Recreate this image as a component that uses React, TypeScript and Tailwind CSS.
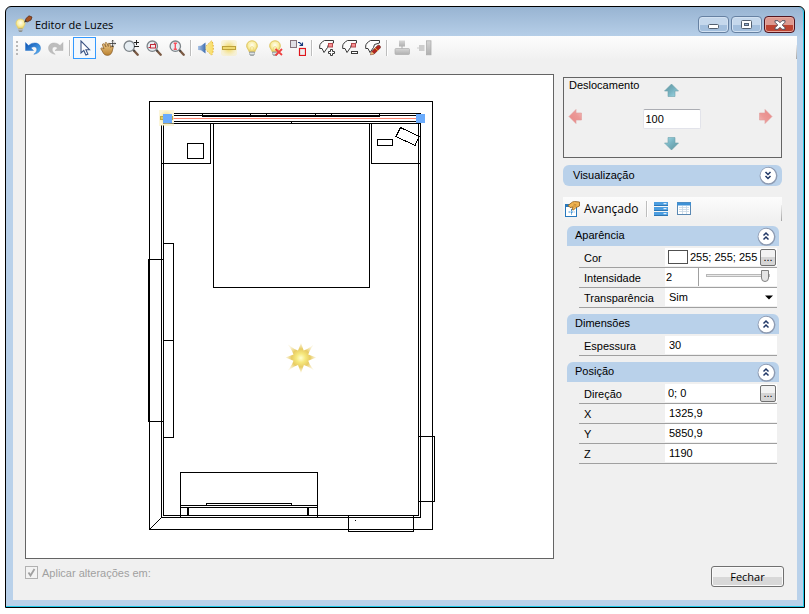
import React, { useState } from "react";

const SANS = "font-['Liberation_Sans',Arial,sans-serif]";
const SEGOE = "font-['Open_Sans','Noto_Sans',sans-serif]";

function Icon({ children, size = 16 }: { children: React.ReactNode; size?: number }) {
  return (
    <svg width={size} height={size} viewBox="0 0 16 16" fill="none" aria-hidden="true" className="shrink-0">
      {children}
    </svg>
  );
}

function Defs() {
  return (
    <svg width="0" height="0" className="absolute" aria-hidden="true">
      <defs>
        <linearGradient id="blueArrow" x1="0" y1="0" x2="1" y2="1">
          <stop offset="0" stopColor="#0b4fb0" />
          <stop offset="1" stopColor="#5cb6f5" />
        </linearGradient>
        <linearGradient id="hand" x1="0" y1="0" x2="0" y2="1">
          <stop offset="0" stopColor="#f3cf8d" />
          <stop offset="1" stopColor="#b9802f" />
        </linearGradient>
        <radialGradient id="bulb" cx="0.5" cy="0.4" r="0.6">
          <stop offset="0" stopColor="#fffef0" />
          <stop offset="0.6" stopColor="#f9eda0" />
          <stop offset="1" stopColor="#e6cb58" />
        </radialGradient>
        <radialGradient id="glow">
          <stop offset="0.3" stopColor="#f3df82" />
          <stop offset="1" stopColor="#f8edb8" stopOpacity="0.5" />
        </radialGradient>
        <radialGradient id="starFill">
          <stop offset="0" stopColor="#ffffd0" />
          <stop offset="0.3" stopColor="#f6e87c" />
          <stop offset="0.6" stopColor="#e8cc64" />
          <stop offset="1" stopColor="#f0dc94" stopOpacity="0.3" />
        </radialGradient>
        <linearGradient id="teal" x1="0" y1="0" x2="1" y2="1">
          <stop offset="0" stopColor="#5d929c" />
          <stop offset="0.55" stopColor="#79b4c2" />
          <stop offset="1" stopColor="#a3dbe8" />
        </linearGradient>
        <linearGradient id="pink" x1="0" y1="0" x2="1" y2="1">
          <stop offset="0" stopColor="#e88886" />
          <stop offset="0.6" stopColor="#ec9896" />
          <stop offset="1" stopColor="#f3bcba" />
        </linearGradient>
        <linearGradient id="grayBox" x1="0" y1="0" x2="0" y2="1">
          <stop offset="0" stopColor="#d6d6d6" />
          <stop offset="1" stopColor="#b0b0b0" />
        </linearGradient>
        <linearGradient id="cone" x1="0" y1="0" x2="1" y2="0">
          <stop offset="0" stopColor="#a9c3e6" />
          <stop offset="1" stopColor="#3e6db0" />
        </linearGradient>
        <linearGradient id="beam" x1="0" y1="0" x2="1" y2="0">
          <stop offset="0" stopColor="#f4e9a8" />
          <stop offset="1" stopColor="#fbdd62" />
        </linearGradient>
      </defs>
    </svg>
  );
}

const bulbShape = (
  <>
    <path d="M8 .8C4.8.8 2.700 3 2.700 5.800c0 2 1.100 3.100 1.900 4.400.3.600.4 1 .4 1.500h6c0-.5.1-.9.4-1.500.8-1.300 1.900-2.400 1.900-4.400C13.300 3 11.200.8 8 .8z" fill="url(#bulb)" stroke="#dfc765" />
    <path d="M6.500 11V7.500L8 6.500l1.500 1V11" stroke="#ecd77c" strokeWidth=".7" />
    <path d="M5.500 12h5v2l-1 1.500h-3l-1-1.500z" fill="#b4babd" stroke="#8b9395" strokeWidth=".7" />
    <path d="M5.500 13.400h5" stroke="#e5e9ea" />
  </>
);

const magnifier = (
  <>
    <path d="M10.800 10.500l3.900 4.200" stroke="#7b5a44" strokeWidth="2.400" strokeLinecap="round" />
    <path d="M10 9.500l1.700 1.800" stroke="#454545" strokeWidth="1.800" />
    <circle cx="6.300" cy="6.200" r="5.200" fill="#e6edf2" stroke="#7d8489" strokeWidth="1.300" />
  </>
);

const polyShape = (
  <path d="M14.500 3V.5H5.500C2.700 2 .7 4 .7 6v2.500h2.300L5 12.500l3.500-5 1-3z" fill="#fcfcfc" stroke="#3a3a3a" strokeWidth="1" />
);

const icons = {
  undo: (
    <path d="M.5 2.500v8h8L6 8c2.600-2.100 5.800-1.300 5.800 1.500 0 2-1 3.300-3 4.800 4-.6 6.700-2.800 6.700-6.200C15.500 2.800 8.700 1 3.500 5.500z" fill="url(#blueArrow)" stroke="#1767c4" strokeWidth=".4" />
  ),
  redo: (
    <path d="M15 2.500v8H7L9.600 8C7.200 5.900 4.200 6.700 4.200 9.500c0 2 1 3.300 3 4.800-4-.6-6.700-2.800-6.700-6.200C.5 2.800 7.300 1 12 5.500z" fill="#bdbdbd" stroke="#a8a8a8" strokeWidth=".4" />
  ),
  pointer: <path d="M4 1v12l2.800-2.600L8.900 15l2-.9-2-4.400h3.600z" fill="#fff" stroke="#3b5384" strokeWidth="1.100" />,
  hand: (
    <>
      <path d="M.8 8.500C1.500 7.500 3 8 4 9L2.500 5c-.2-1.500 1.300-1.700 2-.5L6 7 5 3.500c0-1.300 1.500-1.500 2-.2L8.300 6.500 8.200 4c.2-1.200 1.600-1 1.800.2l.7 3.300 1-1.500c1-.8 2 .1 1.500 1.200L12 12c-.8 2.500-3 3.600-5.500 3.300C3.500 15 3 12 .8 8.500z" fill="url(#hand)" stroke="#8d622f" strokeWidth=".8" />
      <path d="M12.700 0v7M9.500 3.500h6.500" stroke="#333" strokeWidth=".8" />
      <path d="M11.700 1.300L12.700.2l1 1.100M11.700 5.700l1 1.200 1-1.200M14.800 2.500l1 1-1 1" stroke="#333" strokeWidth=".6" />
    </>
  ),
  zoomPM: (
    <>
      {magnifier}
      <path d="M13.500 0v5M11 2.500h5M11 6.500h5" stroke="#222" strokeWidth="1" />
    </>
  ),
  zoomWindow: (
    <>
      {magnifier}
      <rect x="4.500" y="4.500" width="5" height="3.500" fill="#f7e9ea" stroke="#c02a38" strokeWidth="1" />
      <path d="M2.500 7.500h1.500M8 3l1.500.8" stroke="#c02a38" strokeWidth="1" />
    </>
  ),
  zoomExt: (
    <>
      {magnifier}
      <path d="M6.300 3.300v6M4.700 3.300h3.200M4.700 9.200h3.200" stroke="#f8505c" strokeWidth="1.400" />
    </>
  ),
  spot: (
    <>
      <path d="M6 8L13.500.8c2.500 1.700 2.500 12.700 0 14.400z" fill="url(#beam)" />
      <path d="M6 8L13.500.8c2.500 1.700 2.500 12.700 0 14.400z" stroke="#d9a326" strokeWidth=".8" strokeDasharray="1.500 1.500" />
      <path d="M0 6l3-.3L7.500 2.500v11L3 10.300 0 10z" fill="url(#cone)" />
    </>
  ),
  tube: (
    <>
      <rect width="16" height="16" rx="3" fill="url(#glow)" />
      <rect x="1.500" y="6.500" width="13" height="3" fill="#eed870" stroke="#bda13b" />
    </>
  ),
  bulb: bulbShape,
  bulbX: (
    <>
      {bulbShape}
      <path d="M8.500 9l6.500 6M15 9l-6.500 6.500" stroke="#ee4141" strokeWidth="1.800" />
    </>
  ),
  convert: (
    <>
      <rect x=".5" y=".5" width="6" height="7" fill="#e1e0e5" stroke="#85737b" />
      <path d="M8 2.500h1.500L12 5M12.500 2.500v3H9.500" stroke="#173a7c" strokeWidth="1.100" />
      <rect x="9.500" y="8.500" width="6" height="7" fill="#eee" stroke="#df151c" strokeWidth="1.200" />
    </>
  ),
  polyAdd: (
    <>
      {polyShape}
      <rect x="9.500" y="3.500" width="4" height="3.500" fill="#f58f90" stroke="#b5494e" />
      <path d="M11.500 9.500h2v2h2v2h-2v2h-2v-2h-2v-2h2z" fill="#fff" stroke="#3a3a3a" />
    </>
  ),
  polyRemove: (
    <>
      {polyShape}
      <rect x="9.500" y="3.500" width="4" height="3.500" fill="#f58f90" stroke="#b5494e" />
      <rect x="9.500" y="11.500" width="6" height="2" fill="#fff" stroke="#3a3a3a" />
    </>
  ),
  polyEdit: (
    <>
      {polyShape}
      <path d="M5.500 14.800l1.200-3.400 6-6c1.300-1 3.700 1 2.600 2.500L9.200 14z" fill="#b3261f" stroke="#61251c" strokeWidth=".6" />
      <path d="M5.500 14.800l1.200-3.400L9.200 14z" fill="#e8c37f" />
      <path d="M10 8l3 2.800" stroke="#e7a62d" />
    </>
  ),
  alignH: (
    <>
      <rect x="5" y=".5" width="6" height="6" fill="url(#grayBox)" />
      <path d="M8 6v3" stroke="#aaa" />
      <rect x="1" y="8.500" width="14.500" height="6" rx="1" fill="url(#grayBox)" stroke="#adadad" strokeWidth=".7" />
    </>
  ),
  alignV: (
    <>
      <path d="M0 8h3" stroke="#ccc" />
      <rect x="2" y="5" width="5.500" height="6" fill="#cdcdcd" />
      <rect x="9.500" y=".8" width="4.500" height="14" fill="url(#grayBox)" stroke="#adadad" strokeWidth=".8" />
    </>
  ),
};

type IconName = keyof typeof icons;

const toolGroups: { name: IconName; label: string; active?: boolean; disabled?: boolean }[][] = [
  [
    { name: "undo", label: "Desfazer" },
    { name: "redo", label: "Refazer", disabled: true },
  ],
  [
    { name: "pointer", label: "Selecionar", active: true },
    { name: "hand", label: "Mover vista" },
    { name: "zoomPM", label: "Zoom" },
    { name: "zoomWindow", label: "Zoom janela" },
    { name: "zoomExt", label: "Zoom extensão" },
  ],
  [
    { name: "spot", label: "Spot" },
    { name: "tube", label: "Luz linear" },
    { name: "bulb", label: "Lâmpada" },
    { name: "bulbX", label: "Remover luz" },
    { name: "convert", label: "Converter" },
  ],
  [
    { name: "polyAdd", label: "Adicionar ponto" },
    { name: "polyRemove", label: "Remover ponto" },
    { name: "polyEdit", label: "Editar forma" },
  ],
  [
    { name: "alignH", label: "Alinhar horizontal", disabled: true },
    { name: "alignV", label: "Alinhar vertical", disabled: true },
  ],
];

function TitleBar() {
  return (
    <header className="flex h-[29px] items-center pr-[2px] pl-[2px]">
      <svg width="18" height="18" viewBox="0 0 18 18" aria-hidden="true" className="mt-1">
        <path d="M5.500 4C2.500 4 1 6 1 8.500c0 2 1.600 2.800 2 5h5c.4-2.200 2-3 2-5C10 6 8.500 4 5.500 4z" fill="url(#bulb)" stroke="#e3cf70" strokeWidth=".8" />
        <path d="M3.500 13.500h4v2.500l-1 1h-2l-1-1z" fill="#8b8d8a" />
        <path d="M3.500 14.800h4" stroke="#eee" strokeWidth=".7" />
        <path d="M10 6.500l1-3L14 .8l3 1.200-1 3-3.500 1.800z" fill="#a35021" stroke="#532713" strokeWidth=".7" />
        <path d="M9 7.500l1.500-2.500 1.500 1.500z" fill="#35363b" />
      </svg>
      <h1 className={`mt-1.5 ml-0.5 flex-1 text-[11px] leading-4 text-black ${SEGOE}`}>Editor de Luzes</h1>
      <div className="mt-1.5 flex gap-0.5">
        <button aria-label="Minimizar" className="flex h-[17px] w-[31px] items-center justify-center rounded-sm border border-[#6681a2] bg-linear-to-b from-[#c5d8ec] from-50% to-[#a3bfdd] to-50% shadow-[inset_0_0_0_1px_#d3e2f2]">
          <svg width="12" height="6" viewBox="0 0 12 6" className="mt-1" aria-hidden="true">
            <rect x=".5" y=".5" width="10" height="4" rx="1" fill="#fff" stroke="#536070" />
          </svg>
        </button>
        <button aria-label="Maximizar" className="flex h-[17px] w-[31px] items-center justify-center rounded-sm border border-[#6681a2] bg-linear-to-b from-[#c5d8ec] from-50% to-[#a3bfdd] to-50% shadow-[inset_0_0_0_1px_#d3e2f2]">
          <svg width="11" height="9" viewBox="0 0 11 9" aria-hidden="true">
            <rect x=".5" y=".5" width="10" height="8" rx="1" fill="#fff" stroke="#536070" />
            <rect x="3.500" y="3.500" width="4" height="2" fill="#96b2d4" stroke="#536070" />
          </svg>
        </button>
        <button aria-label="Fechar janela" className="flex h-[17px] w-[31px] items-center justify-center rounded-sm border border-[#521520] bg-linear-to-b from-[#dd9a91] from-50% to-[#bd4432] to-50% shadow-[inset_0_0_0_1px_#e8aaa0]">
          <svg width="12" height="10" viewBox="0 0 12 10" aria-hidden="true">
            <path d="M1 .7h3l2 2 2-2h3v1.500L8.300 5 11 7.800v1.500H8l-2-2-2 2H1V7.800L3.700 5 1 2.200z" fill="#fff" stroke="#535260" />
          </svg>
        </button>
      </div>
    </header>
  );
}

function ToolBar() {
  return (
    <div role="toolbar" aria-label="Ferramentas" className="flex h-6 items-center bg-linear-to-b from-[#fdfdfd] to-[#f0f0f0]">
      <span className="mr-[3px] ml-[3px] h-[15px] w-0.5 bg-[repeating-linear-gradient(to_bottom,#b9b9b9_0_2px,transparent_2px_4px)]" />
      {toolGroups.map((group, i) => (
        <React.Fragment key={i}>
          {i > 0 && <span className="mx-[2px] h-4 w-0.5 border-l border-[#bdbdbd] bg-white" />}
          {group.map((t) => (
            <button
              key={t.name}
              aria-label={t.label}
              disabled={t.disabled}
              aria-pressed={t.active}
              className={
                t.active
                  ? "flex h-[22px] w-[23px] items-center justify-center border border-[#3399ff] bg-[#f3f8fd]"
                  : "flex h-[22px] w-[23px] items-center justify-center"
              }
            >
              <Icon>{icons[t.name]}</Icon>
            </button>
          ))}
        </React.Fragment>
      ))}
      <span className="mt-2 ml-auto h-3.5 w-px bg-linear-to-b from-[#eeeeee] to-[#a5a5a5]" />
    </div>
  );
}

function FloorPlan() {
  return (
    <svg viewBox="26 75 527 483" className="block h-full w-full" role="img" aria-label="Planta do ambiente">
      <g stroke="#000" fill="none" shapeRendering="crispEdges">
        {/* walls */}
        <rect x="149.500" y="101.500" width="283" height="428" />
        <path d="M161.500 125v393M163.500 125v391M161 517.500h260M163 515.500h256M418.500 123v393M420.500 113v405" />
        <path d="M149.500 529.500l12-12" />
        {/* curtain rail */}
        <path d="M174 113.500h247M174 115.500h247M174 121.500h247M163 123.500h258M291.500 121v3" />
        <path d="M202 116.500h178M202.500 114v3M250.500 114v3M266.500 114v3M315.500 114v3M331.500 114v3M379.500 114v3" />
        {/* bed and bedside tables */}
        <path d="M161 163.500h49.500V123M213.500 123v164.500h156V123M371.500 123v40.500H421" />
        <rect x="187.500" y="143.500" width="16" height="15" />
        <rect x="377.500" y="139.500" width="15" height="6" />
        <path d="M400.500 127.500l18.500 9-4 9-19-9z" />
        {/* window and wardrobe */}
        <path d="M163 259.500h-14.500v162H163M149.500 259v163M163 243.500h10.500v194H163M163 340.500h10" />
        {/* sideboard */}
        <path d="M180.500 517V472.500h137V517M180 505.500h137M180 507.500h137M206.500 505v-1.500h85v2" />
        <path d="M188 507v9M308 507v9" strokeWidth="2" />
        {/* doors */}
        <path d="M348.500 515v16.500h65V515M418 436.500h16.500v65H418M355 520.500h1" />
      </g>
      <path d="M173 118.500h244" stroke="#ff8370" shapeRendering="crispEdges" />
      <rect x="159" y="110" width="15" height="16" fill="url(#glow)" />
      <rect x="160.500" y="116.500" width="12" height="3" fill="#e0cb68" stroke="#bda945" shapeRendering="crispEdges" />
      <path d="M163 114h9v9h-9zM416 114h9v9h-9z" fill="#6aabfc" shapeRendering="crispEdges" />
      <path
        d="M301 343l2.700 7.500 3.500-1.500 6-4-3.500 6-1.500 3.500 8 3-8 3.300 1.500 3.400 4 5.800-6.200-3.500-3.600-1.500L301 373l-3-8-3.500 1.500-6.500 4 4-6.300 1.500-3.400-8-3.300 8-3-1.500-3.500-4-6.500 6.500 4.500 3.500 1.500z"
        fill="url(#starFill)"
      />
    </svg>
  );
}

const arrowRotation = { up: "", right: "rotate-90", down: "rotate-180", left: "-rotate-90" };

function MoveButton({ dir, label, className }: { dir: keyof typeof arrowRotation; label: string; className: string }) {
  const vertical = dir === "up" || dir === "down";
  return (
    <button aria-label={label} className={className}>
      <svg width="15" height="15" viewBox="0 0 15 15" className={arrowRotation[dir]} aria-hidden="true">
        <path d="M7.500 1l7 7H11v5.500H4V8H.5z" fill={vertical ? "url(#teal)" : "url(#pink)"} stroke={vertical ? "#6fa2ad" : "#e09c9a"} strokeWidth=".6" />
      </svg>
    </button>
  );
}

function Displacement() {
  return (
    <section className="grid h-[81px] grid-cols-[24px_1fr_26px] grid-rows-[24px_32px_20px] items-center justify-items-center border border-[#646464]">
      <label htmlFor="step" className="col-start-1 row-start-1 mb-2.5 w-full pl-[5px] leading-4 whitespace-nowrap">
        Deslocamento
      </label>
      <MoveButton dir="up" label="Mover para cima" className="col-start-2 row-start-1" />
      <MoveButton dir="left" label="Mover para a esquerda" className="col-start-1 row-start-2 mr-0.5 mb-1" />
      <input
        id="step"
        defaultValue="100"
        className="col-start-2 row-start-2 mt-0.5 h-5 w-[58px] rounded-xs border border-[#e2e3ea] border-t-[#abadb3] bg-white px-0.5 outline-none"
      />
      <MoveButton dir="right" label="Mover para a direita" className="col-start-3 row-start-2 mr-1.5 mb-1" />
      <MoveButton dir="down" label="Mover para baixo" className="col-start-2 row-start-3 mb-0.5" />
    </section>
  );
}

function RoundChevron({ down = false }: { down?: boolean }) {
  return (
    <svg width="19" height="19" viewBox="0 0 19 19" className="shrink-0" aria-hidden="true">
      <circle cx="9.500" cy="9.800" r="8.200" fill="#fff" stroke="#8f9cb3" strokeWidth="1.500" />
      <circle cx="9" cy="9.300" r="7.500" fill="#fff" />
      <path
        d={down ? "M6.500 6l2.500 2.500L11.500 6M6.500 10l2.500 2.500 2.500-2.500" : "M6.500 8.500L9 6l2.500 2.500M6.500 12.500L9 10l2.500 2.500"}
        fill="none"
        stroke="#203766"
        strokeWidth="1.500"
      />
    </svg>
  );
}

function Group({ title, children }: { title: string; children: React.ReactNode }) {
  const [open, setOpen] = useState(true);
  return (
    <section className="mr-[3px] mb-1.5 ml-1">
      <button
        aria-expanded={open}
        onClick={() => setOpen(!open)}
        className="flex h-5 w-full items-center justify-between rounded-t-md bg-[#b9d1ea] pr-[3px] pl-2 text-left"
      >
        <span className="mb-0.5 leading-4">{title}</span>
        <RoundChevron down={!open} />
      </button>
      {open && <div className="mt-0.5 mr-0.5 ml-3">{children}</div>}
    </section>
  );
}

function Row({ label, id, children }: { label: string; id: string; children: React.ReactNode }) {
  return (
    <div className="flex h-5 border-b border-[#a0a0a0]">
      <label htmlFor={id} className="w-[86px] shrink-0 pt-0.5 pl-[5px] leading-4">
        {label}
      </label>
      <div className="mb-px flex min-w-0 flex-1 items-center bg-white">{children}</div>
    </div>
  );
}

function TextValue({ id, value }: { id: string; value: string }) {
  return <input id={id} defaultValue={value} className="h-full w-full min-w-0 bg-transparent pl-1 outline-none" />;
}

function MoreButton({ label }: { label: string }) {
  return (
    <button aria-label={label} className="mr-px h-[17px] w-4 shrink-0 rounded-xs border border-[#707070] bg-linear-to-b from-[#f2f2f2] from-50% to-[#d5d5d5] to-50% leading-3">
      ...
    </button>
  );
}

function SidePanel() {
  return (
    <aside className={`w-[219px] shrink-0 pt-[3px] text-[11px] text-black ${SANS}`}>
      <Displacement />
      <button aria-expanded="false" className="mt-[7px] flex h-[21px] w-full items-center justify-between rounded-md bg-[#b9d1ea] pr-1 pl-[10px]">
        <span className="mb-0.5 leading-4">Visualização</span>
        <RoundChevron down />
      </button>
      <div className="mt-[11px] mb-[5px] flex h-6 items-center bg-linear-to-b from-[#fcfcfc] to-[#f0f0f0]">
        <button className={`flex items-center gap-[3px] pl-0.5 text-[12px] leading-4 ${SEGOE}`}>
          <Icon>
            <rect x=".5" y="3.500" width="11" height="12" fill="#fff" stroke="#2778bd" />
            <path d="M.5 5h11" stroke="#2778bd" strokeWidth="2" />
            <path d="M6.500 8v6M3.500 11h6" stroke="#3f92d4" strokeDasharray="2 .7" />
            <path d="M3 4.500L7.500 1l2-.5 5 .5v4L11 6.500 8.500 9 7 8.500 8 6 5 6.500z" fill="#f0b452" stroke="#8a5a1a" strokeWidth=".8" />
            <path d="M8.500 3l3 1M8 5h3" stroke="#a86f22" strokeWidth=".6" />
          </Icon>
          Avançado
        </button>
        <span className="mr-[5px] ml-[7px] h-4 w-0.5 border-l border-[#bdbdbd] bg-white" />
        <button aria-label="Por categoria" className="mr-[7px]">
          <Icon>
            <path d="M1 1h14v3.500H1zM1 6h14v3.500H1zM1 11h14v3.500H1z" fill="#4b9de0" />
            <path d="M1 4.500h14M1 9.500h14M1 14.500h14" stroke="#2d75b2" />
            <path d="M10.500 2.700h3M10.500 7.700h3M10.500 12.700h3" stroke="#fff" />
          </Icon>
        </button>
        <button aria-label="Em tabela">
          <Icon>
            <rect x="1.500" y="1.500" width="13" height="12" fill="#fff" stroke="#5a88b2" />
            <path d="M1 3h14" stroke="#3e91d6" strokeWidth="3" />
            <path d="M6.500 5v8M10.500 5v8M3 6.500h10M3 8.500h10M3 10.500h10" stroke="#c5d5e3" strokeWidth=".8" />
          </Icon>
        </button>
        <span className="mt-2 ml-auto h-4 w-px bg-linear-to-b from-[#eeeeee] to-[#a5a5a5]" />
      </div>

      <Group title="Aparência">
        <Row label="Cor" id="color">
          <span className="ml-[3px] h-[14px] w-5 shrink-0 border border-[#505050] bg-white" />
          <input id="color" defaultValue="255; 255; 255" className="h-full min-w-0 flex-1 bg-transparent pl-0.5 outline-none" />
          <MoreButton label="Escolher cor" />
        </Row>
        <Row label="Intensidade" id="intensity">
          <input id="intensity" defaultValue="2" className="h-full w-[34px] border-r border-[#a0a0a0] bg-transparent pl-px outline-none" />
          <input
            type="range"
            aria-label="Intensidade"
            defaultValue="100"
            className="mx-[7px] mb-1 h-3 min-w-0 flex-1 appearance-none bg-transparent [&::-webkit-slider-runnable-track]:h-[3px] [&::-webkit-slider-runnable-track]:border [&::-webkit-slider-runnable-track]:border-[#b8b8b8] [&::-webkit-slider-runnable-track]:bg-[#e8e8e8] [&::-webkit-slider-thumb]:-mt-[5px] [&::-webkit-slider-thumb]:h-3 [&::-webkit-slider-thumb]:w-2 [&::-webkit-slider-thumb]:appearance-none [&::-webkit-slider-thumb]:rounded-b-[4px] [&::-webkit-slider-thumb]:border [&::-webkit-slider-thumb]:border-[#808080] [&::-webkit-slider-thumb]:bg-[#e4e4e4]"
          />
        </Row>
        <Row label="Transparência" id="transparency">
          <select id="transparency" className="h-full w-full appearance-none bg-transparent pl-1 outline-none">
            <option>Sim</option>
            <option>Não</option>
          </select>
          <svg width="8" height="5" viewBox="0 0 8 5" className="pointer-events-none mr-1 shrink-0" aria-hidden="true">
            <path d="M0 .5h8L4 4.500z" fill="#000" />
          </svg>
        </Row>
      </Group>
      <Group title="Dimensões">
        <Row label="Espessura" id="thickness">
          <TextValue id="thickness" value="30" />
        </Row>
      </Group>
      <Group title="Posição">
        <Row label="Direção" id="direction">
          <input id="direction" defaultValue="0; 0" className="h-full min-w-0 flex-1 bg-transparent pl-[3px] outline-none" />
          <MoreButton label="Escolher direção" />
        </Row>
        <Row label="X" id="pos-x">
          <TextValue id="pos-x" value="1325,9" />
        </Row>
        <Row label="Y" id="pos-y">
          <TextValue id="pos-y" value="5850,9" />
        </Row>
        <Row label="Z" id="pos-z">
          <TextValue id="pos-z" value="1190" />
        </Row>
      </Group>
    </aside>
  );
}

export default function App() {
  return (
    <div className="flex h-screen min-h-[560px] flex-col bg-white pt-1.5 pr-1 pb-1.5 pl-[5px]">
      <Defs />
      <div className="flex min-h-0 flex-1 flex-col rounded-t-md border border-black bg-linear-to-b from-[#98b4d2] to-[#b9d1ea] to-[32px]">
        <div className="flex min-h-0 flex-1 flex-col rounded-tr-md border-r border-b border-[#1fc8e8] pr-1.5 pb-1.5 pl-[7px]">
          <TitleBar />
          <div className="flex min-h-0 flex-1 flex-col bg-[#f0f0f0]">
            <ToolBar />
            <main className="flex min-h-0 flex-1 gap-[9px] pt-3.5 pr-[15px] pl-3">
              <div className="min-h-0 min-w-0 flex-1 border border-[#646464] bg-white">
                <FloorPlan />
              </div>
              <SidePanel />
            </main>
            <footer className="flex items-start justify-between pt-[7px] pr-[13px] pb-[13px] pl-3">
              <label className={`flex items-center gap-1 text-[11px] leading-3 text-[#a0a0a0] ${SANS}`}>
                <span className="grid">
                  <input type="checkbox" defaultChecked disabled className="col-start-1 row-start-1 h-[13px] w-[13px] appearance-none border border-[#b1b1b1] bg-[#f3f3f3]" />
                  <svg width="13" height="13" viewBox="0 0 13 13" className="pointer-events-none col-start-1 row-start-1" aria-hidden="true">
                    <path d="M3.500 6.500l2 3 4-6.500" fill="none" stroke="#a0a0a0" strokeWidth="1.800" />
                  </svg>
                </span>
                Aplicar alterações em:
              </label>
              <button className={`h-[21px] w-[73px] rounded-[3px] border border-[#707070] bg-linear-to-b from-[#f2f2f2] from-50% to-[#d8d8d8] to-50% text-[11px] leading-4 text-black shadow-[inset_0_0_0_1px_#fafafa] ${SEGOE}`}>
                Fechar
              </button>
            </footer>
          </div>
        </div>
      </div>
    </div>
  );
}
